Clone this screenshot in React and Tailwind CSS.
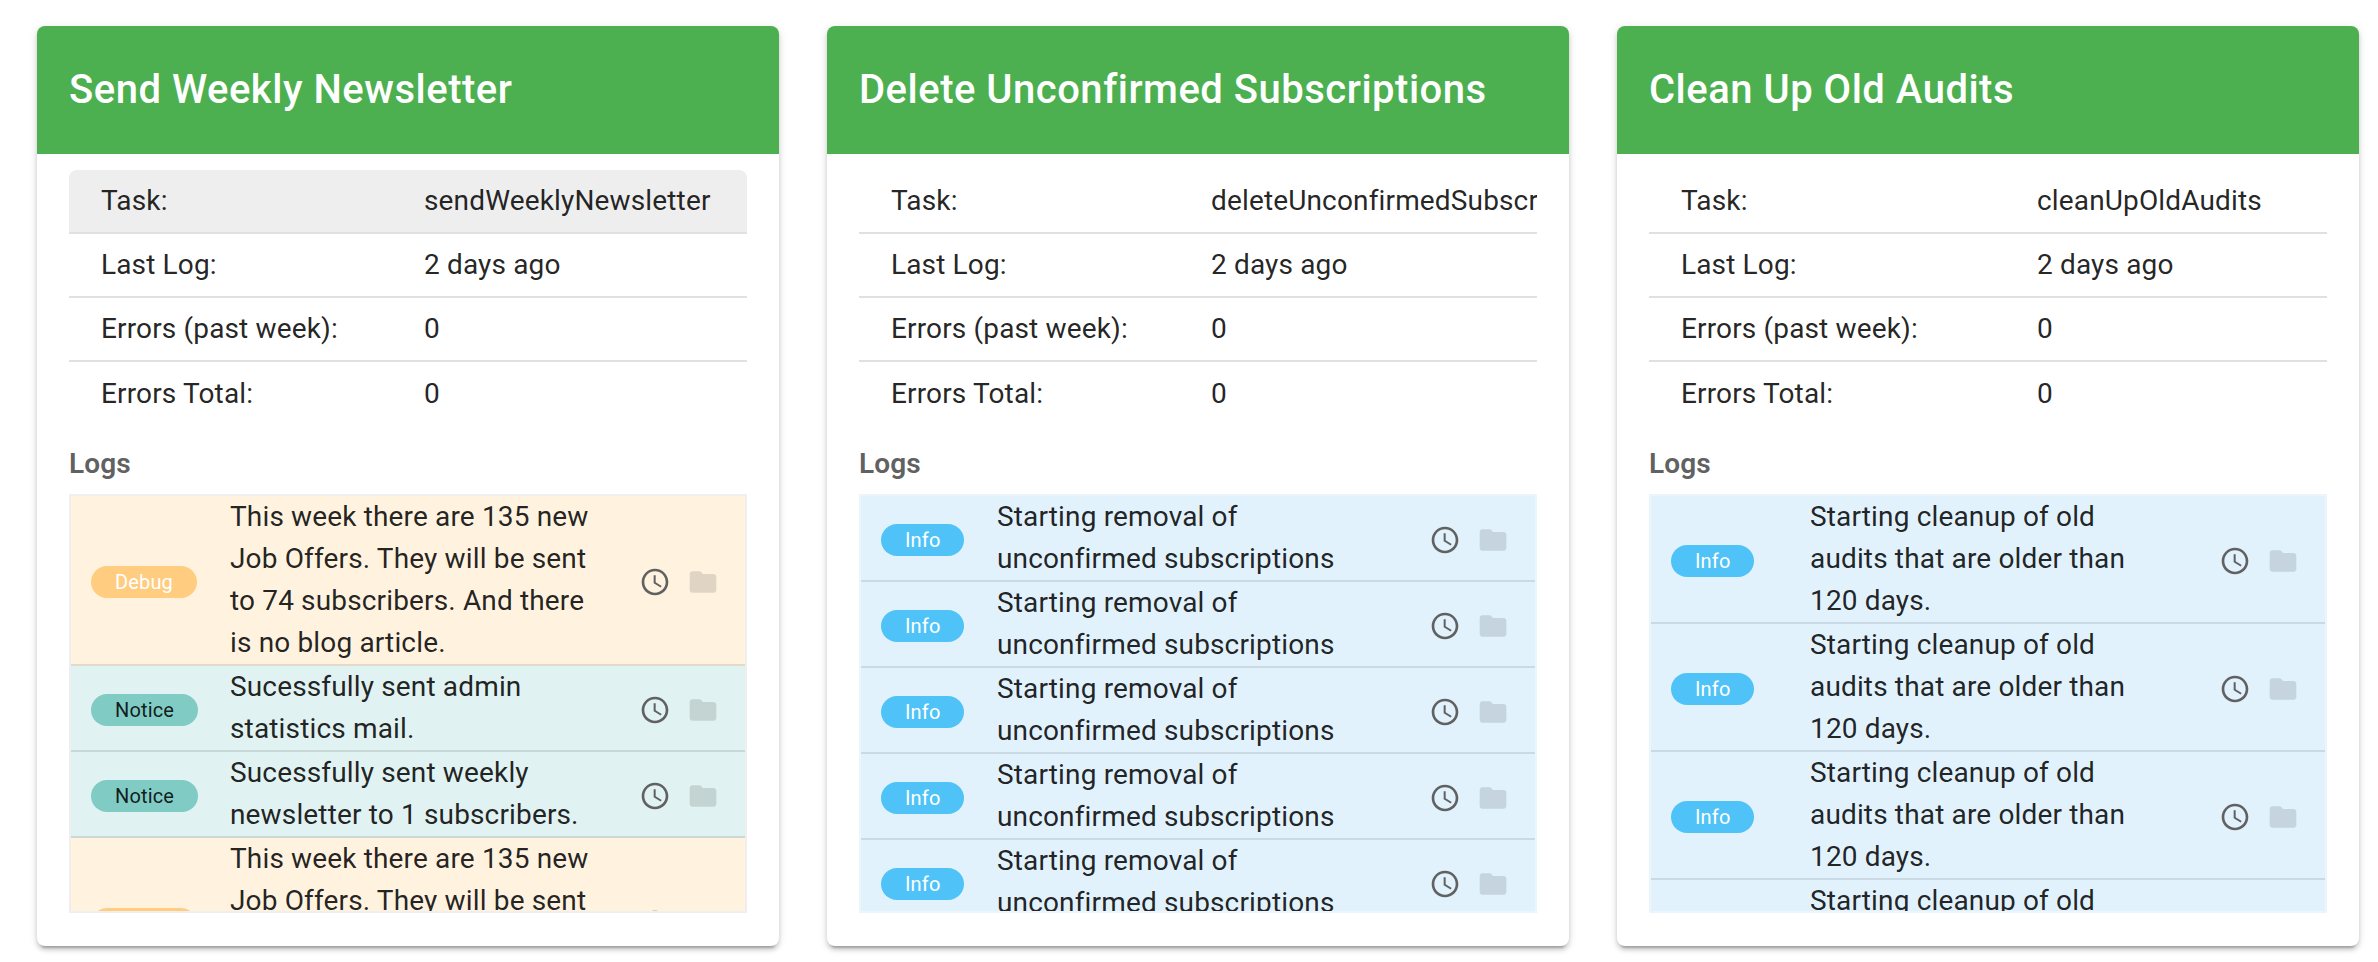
import { MdAccessTime, MdFolder } from 'react-icons/md'

const LEVELS = {
  debug: { label: 'Debug', row: 'bg-[#fff3e0]', pill: 'bg-[#ffcc80] text-white' },
  notice: { label: 'Notice', row: 'bg-[#e0f2f1]', pill: 'bg-[#80cbc4] text-[#000000de]' },
  info: { label: 'Info', row: 'bg-[#e1f2fd]', pill: 'bg-[#4fc3f7] text-white' },
}

const weekly = 'This week there are 135 new Job Offers. They will be sent to 74 subscribers. And there is no blog article.'
const removal = 'Starting removal of unconfirmed subscriptions'
const cleanup = 'Starting cleanup of old audits that are older than 120 days.'

const cards = [
  {
    title: 'Send Weekly Newsletter',
    task: 'sendWeeklyNewsletter',
    keyWidth: 'w-[355px]',
    pillCell: 'w-[159px]',
    textCell: 'w-[380px]',
    listBorder: 'border-[#efefef]',
    hoverFirst: true,
    logs: [
      ['debug', weekly],
      ['notice', 'Sucessfully sent admin statistics mail.'],
      ['notice', 'Sucessfully sent weekly newsletter to 1 subscribers.'],
      ['debug', weekly],
    ],
  },
  {
    title: 'Delete Unconfirmed Subscriptions',
    task: 'deleteUnconfirmedSubscriptions',
    keyWidth: 'w-[352px]',
    pillCell: 'w-[136px]',
    textCell: 'w-[404px]',
    listBorder: 'border-[#ebf5fb]',
    logs: [
      ['info', removal],
      ['info', removal],
      ['info', removal],
      ['info', removal],
      ['info', removal],
    ],
  },
  {
    title: 'Clean Up Old Audits',
    task: 'cleanUpOldAudits',
    keyWidth: 'w-[388px]',
    pillCell: 'w-[159px]',
    textCell: 'w-[374px]',
    listBorder: 'border-[#ebf5fb]',
    logs: [
      ['info', cleanup],
      ['info', cleanup],
      ['info', cleanup],
      ['info', cleanup],
    ],
  },
]

const InfoRow = ({ label, value, keyWidth, highlight }) => (
  <div className={`flex h-16 items-center overflow-hidden whitespace-nowrap border-b-2 border-[#e0e0e0] last:border-b-0 ${highlight ? 'rounded-t-lg bg-[#eeeeee]' : ''}`}>
    <div className={`${keyWidth} shrink-0 pl-8`}>{label}</div>
    <div className="shrink-0">{value}</div>
  </div>
)

const LogRow = ({ level, text, pillCell, textCell }) => {
  const { label, row, pill } = LEVELS[level]
  return (
    <div className={`${row} flex shrink-0 items-center border-b-2 border-black/10`}>
      <div className={`${pillCell} shrink-0 pl-5`}>
        <span className={`${pill} inline-flex h-8 items-center rounded-full px-6 text-[20px] leading-8`}>{label}</span>
      </div>
      <div className={`${textCell} shrink-0 pr-2`}>{text}</div>
      <div className="ml-auto flex shrink-0 items-center gap-4 pr-[26px] pt-1">
        <MdAccessTime size={32} className="text-[#616161]" />
        <MdFolder size={32} className="text-black/[0.12]" />
      </div>
    </div>
  )
}

const TaskCard = ({ title, task, keyWidth, pillCell, textCell, listBorder, hoverFirst, logs }) => (
  <div className="flex h-[920px] w-[742px] shrink-0 flex-col rounded-lg bg-white shadow-[0_6px_2px_-4px_rgba(0,0,0,0.2),0_4px_4px_0_rgba(0,0,0,0.14),0_2px_10px_0_rgba(0,0,0,0.12)]">
    <div className="flex h-32 shrink-0 items-center rounded-t-lg bg-[#4caf50] px-8 text-[40px] font-medium tracking-[0.5px] text-white">
      {title}
    </div>
    <div className="flex min-h-0 flex-1 flex-col px-8 pt-4">
      <div className="overflow-hidden">
        <InfoRow label="Task:" value={task} keyWidth={keyWidth} highlight={hoverFirst} />
        <InfoRow label="Last Log:" value="2 days ago" keyWidth={keyWidth} />
        <InfoRow label="Errors (past week):" value="0" keyWidth={keyWidth} />
        <InfoRow label="Errors Total:" value="0" keyWidth={keyWidth} />
      </div>
      <div className="mt-[18px] h-[50px] font-semibold leading-10 text-[#616161]">Logs</div>
      <div className={`flex h-[419px] flex-col overflow-hidden border-2 ${listBorder}`}>
        {logs.map(([level, text], i) => (
          <LogRow key={i} level={level} text={text} pillCell={pillCell} textCell={textCell} />
        ))}
      </div>
    </div>
  </div>
)

const App = () => (
  <div className="flex min-h-[962px] gap-12 overflow-hidden bg-white pl-[37px] pt-[26px] font-['Roboto',sans-serif] text-[28px] leading-[42px] tracking-[0.15px] text-[#000000de]">
    {cards.map(card => (
      <TaskCard key={card.title} {...card} />
    ))}
  </div>
)

export default App
